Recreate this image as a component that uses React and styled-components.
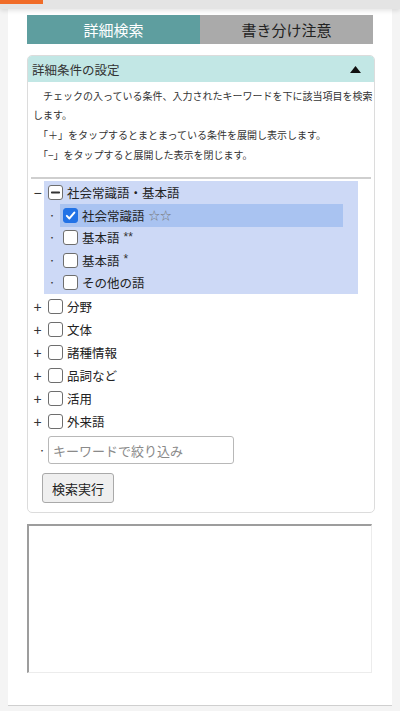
import React from 'react';
import styled, { createGlobalStyle } from 'styled-components';

const GlobalStyle = createGlobalStyle`
  html, body {
    margin: 0;
    padding: 0;
    background: #f4f4f4;
    font-family: "Noto Sans CJK JP", "Noto Sans", sans-serif;
    color: #333;
  }
  * { box-sizing: border-box; }
`;

const Screen = styled.div`
  width: 400px;
  height: 711px;
  display: flex;
  flex-direction: column;
  overflow: hidden;
  background: #f4f4f4;
`;

/* 上部のバー */
const TopBar = styled.div`
  height: 9px;
  flex: none;
  background: #e4e4e4;
  box-shadow: 0 2px 4px rgba(0, 0, 0, 0.1);
  position: relative;
  z-index: 1;
`;

const Badge = styled.div`
  width: 43px;
  height: 4px;
  background: #f06c28;
`;

const Page = styled.div`
  margin: 0 8px;
  height: 697px;
  flex: none;
  background: #fff;
  padding: 6px 17px 0 19px;
  border-bottom: 1px solid #cfcfcf;
`;

const Tabs = styled.div`
  display: flex;
  width: 346px;
  height: 29px;
`;

const Tab = styled.div`
  flex: 1;
  display: flex;
  align-items: center;
  justify-content: center;
  font-size: 15px;
  background: ${(p) => (p.active ? '#5e9e9f' : '#aaaaaa')};
  color: ${(p) => (p.active ? '#fff' : '#222')};
`;

const Panel = styled.div`
  margin-top: 11px;
  border: 1px solid #dcdcdc;
  border-radius: 5px;
  height: 458px;
  display: flex;
  flex-direction: column;
`;

const PanelHeader = styled.div`
  height: 26px;
  display: flex;
  align-items: center;
  justify-content: space-between;
  padding: 0 13px 0 4px;
  background: #c2e7e5;
  border-radius: 4px 4px 0 0;
  font-size: 12.5px;
  color: #333;
`;

const Description = styled.div`
  padding: 4px 0 0 5px;
  font-size: 10px;
  line-height: 19px;
  color: #333;
  p {
    margin: 0 0 1px;
  }
`;

const Separator = styled.div`
  margin: 12px 3px 2px;
  height: 2px;
  background: #cfcfcf;
`;

const Tree = styled.div`
  padding: 0 16px 0 3px;
`;

const Node = styled.div`
  display: flex;
  align-items: flex-start;
`;

const Toggle = styled.span`
  width: 13px;
  height: 23px;
  flex: none;
  display: flex;
  align-items: center;
  justify-content: center;
  font-family: "Liberation Sans", sans-serif;
  font-size: 14px;
  color: #333;
`;

const Group = styled.div`
  flex: 1;
  background: #cdd9f6;
`;

const Row = styled.div`
  height: ${(p) => p.h || 22.5}px;
  display: flex;
  align-items: center;
  padding-left: ${(p) => p.pad || 4}px;
  font-size: 12.5px;
  color: #222;
`;

const ChildRow = styled.div`
  height: 22.5px;
  display: flex;
  align-items: center;
`;

const Bullet = styled.span`
  width: 16px;
  flex: none;
  text-align: center;
  font-size: 8px;
  color: #333;
`;

const Item = styled.div`
  flex: 1;
  margin-right: 15px;
  height: 100%;
  display: flex;
  align-items: center;
  padding-left: 3px;
  font-size: 12.5px;
  color: #222;
  background: ${(p) => (p.selected ? '#a9c3f1' : 'transparent')};
`;

const Box = styled.span`
  width: 15px;
  height: 15px;
  flex: none;
  margin-right: 4px;
  border-radius: 3px;
  border: 1px solid ${(p) => (p.checked ? '#2272e6' : '#6e6e6e')};
  background: ${(p) => (p.checked ? '#2272e6' : '#fff')};
  display: flex;
  align-items: center;
  justify-content: center;
`;

const Stars = styled.span`
  margin-left: 4px;
  font-size: 11.5px;
  color: #777;
`;

const Mark = styled.span`
  margin-left: 4px;
  font-family: "Liberation Sans", sans-serif;
  font-size: 12px;
  color: #333;
  align-self: flex-start;
  margin-top: 3px;
`;

const SearchRow = styled.div`
  margin-top: 3px;
  display: flex;
  align-items: center;
  padding-left: 10px;
`;

const SearchBullet = styled.span`
  width: 10px;
  font-size: 8px;
  color: #333;
`;

const KeywordInput = styled.input`
  width: 186px;
  height: 28px;
  border: 1px solid #b8b8b8;
  border-radius: 3px;
  padding: 0 4px;
  font-family: "Noto Sans CJK JP", sans-serif;
  font-size: 13px;
  outline: none;
  &::placeholder {
    color: #8a8a8a;
  }
`;

const SearchButton = styled.button`
  margin: 9px 0 0 14px;
  width: 72px;
  height: 30px;
  border: 1px solid #a9a9a9;
  border-radius: 3px;
  background: #efefef;
  font-family: "Noto Sans CJK JP", sans-serif;
  font-size: 13px;
  color: #222;
  padding: 0;
  align-self: flex-start;
`;

const ResultFrame = styled.div`
  margin-top: 11px;
  width: 345px;
  height: 149px;
  border-top: 2px solid #9d9d9d;
  border-left: 2px solid #9d9d9d;
  border-right: 1px solid #ececec;
  border-bottom: 1px solid #ececec;
  background: #fff;
`;

const Check = () => (
  <svg width="11" height="11" viewBox="0 0 12 12">
    <path d="M2 6.4 L4.8 9.2 L10.2 2.8" fill="none" stroke="#fff" strokeWidth="2.2" strokeLinecap="round" strokeLinejoin="round" />
  </svg>
);

const Minus = () => (
  <svg width="11" height="11" viewBox="0 0 12 12">
    <path d="M2 6 H10" stroke="#333" strokeWidth="2" strokeLinecap="round" />
  </svg>
);

const Caret = () => (
  <svg width="11" height="7" viewBox="0 0 11 7">
    <path d="M5.5 0 L11 7 H0 Z" fill="#111" />
  </svg>
);

const children = [
  { label: '社会常識語', extra: <Stars>☆☆</Stars>, checked: true },
  { label: '基本語', extra: <Mark>**</Mark> },
  { label: '基本語', extra: <Mark>*</Mark> },
  { label: 'その他の語' },
];

const categories = ['分野', '文体', '諸種情報', '品詞など', '活用', '外来語'];

const App = () => {
  return (
    <>
      <GlobalStyle />
      <Screen>
        <TopBar>
          <Badge />
        </TopBar>
        <Page>
          <Tabs>
            <Tab active>詳細検索</Tab>
            <Tab>書き分け注意</Tab>
          </Tabs>
          <Panel>
            <PanelHeader>
              <span>詳細条件の設定</span>
              <Caret />
            </PanelHeader>
            <Description>
              <p>　チェックの入っている条件、入力されたキーワードを下に該当項目を検索します。</p>
              <p>　「＋」をタップするとまとまっている条件を展開し表示します。</p>
              <p>　「−」をタップすると展開した表示を閉じます。</p>
            </Description>
            <Separator />
            <Tree>
              <Node>
                <Toggle>−</Toggle>
                <Group>
                  <Row h={23}>
                    <Box>
                      <Minus />
                    </Box>
                    社会常識語・基本語
                  </Row>
                  {children.map((c, i) => (
                    <ChildRow key={i}>
                      <Bullet>・</Bullet>
                      <Item selected={c.checked}>
                        <Box checked={c.checked}>{c.checked && <Check />}</Box>
                        {c.label}
                        {c.extra}
                      </Item>
                    </ChildRow>
                  ))}
                </Group>
              </Node>
              <div style={{ height: 1 }} />
              {categories.map((name) => (
                <Node key={name}>
                  <Toggle>+</Toggle>
                  <Row>
                    <Box />
                    {name}
                  </Row>
                </Node>
              ))}
            </Tree>
            <SearchRow>
              <SearchBullet>・</SearchBullet>
              <KeywordInput placeholder="キーワードで絞り込み" />
            </SearchRow>
            <SearchButton>検索実行</SearchButton>
          </Panel>
          <ResultFrame />
        </Page>
      </Screen>
    </>
  );
};

export default App;
